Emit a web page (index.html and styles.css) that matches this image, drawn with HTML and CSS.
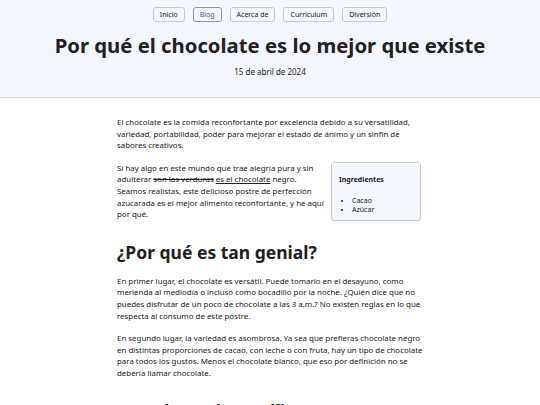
FILE: index.html
```html
<!DOCTYPE html>
<html lang="es">
<head>
<meta charset="utf-8">
<title>Por qué el chocolate es lo mejor que existe</title>
<link rel="stylesheet" href="styles.css">
</head>
<body>
<header class="site-header">
  <nav class="nav">
    <a class="nav-link" href="#">Inicio</a>
    <a class="nav-link current" href="#">Blog</a>
    <a class="nav-link" href="#">Acerca de</a>
    <a class="nav-link" href="#">Curriculum</a>
    <a class="nav-link" href="#">Diversión</a>
  </nav>
  <h1 class="title">Por qué el chocolate es lo mejor que existe</h1>
  <p class="date">15 de abril de 2024</p>
</header>
<main class="content">
  <p class="para">El chocolate es la comida reconfortante por excelencia debido a su versatilidad, variedad, portabilidad, poder para mejorar el estado de ánimo y un sinfín de sabores creativos.</p>
  <aside class="aside">
    <p class="aside-title">Ingredientes</p>
    <ul class="aside-list">
      <li>Cacao</li>
      <li>Azúcar</li>
    </ul>
  </aside>
  <p class="para">Si hay algo en este mundo que trae alegría pura y sin adulterar <del>son las verduras</del> <ins>es el chocolate</ins> negro. Seamos realistas, este delicioso postre de perfección azucarada es el mejor alimento reconfortante, y he aquí por qué.</p>
  <h2 class="subtitle">¿Por qué es tan genial?</h2>
  <p class="para">En primer lugar, el chocolate es versátil. Puede tomarlo en el desayuno, como merienda al mediodía o incluso como bocadillo por la noche. ¿Quién dice que no puedes disfrutar de un poco de chocolate a las 3 a.m.? No existen reglas en lo que respecta al consumo de este postre.</p>
  <p class="para">En segundo lugar, la variedad es asombrosa. Ya sea que prefieras chocolate negro en distintas proporciones de cacao, con leche o con fruta, hay un tipo de chocolate para todos los gustos. Menos el chocolate blanco, que eso por definición no se debería llamar chocolate.</p>
  <h2 class="subtitle">Menciones honoríficas</h2>
</main>
</body>
</html>
```
FILE: styles.css
```css
html, body {
  margin: 0;
  padding: 0;
}
body {
  font-family: "Noto Sans", "Open Sans", sans-serif;
  color: #212121;
  background: #fff;
  font-size: 7.9px;
  line-height: 11.6px;
}
.site-header {
  background: #f5f7ff;
  border-bottom: 1px solid #d0d0d8;
  padding: 7px 0 0;
  height: 90px;
  text-align: center;
}
.nav {
  display: flex;
  justify-content: center;
  gap: 8px;
}
.nav-link {
  display: block;
  font-size: 7px;
  line-height: 13px;
  padding: 0 6px;
  border: 1px solid #c8c8d0;
  border-radius: 3px;
  color: #212121;
  text-decoration: none;
}
.nav-link.current {
  border-color: #7d98cc;
  color: #3b5fa8;
}
.title {
  font-size: 20.3px;
  line-height: 25px;
  font-weight: 700;
  margin: 11px 0 0;
}
.date {
  font-size: 8px;
  line-height: 11px;
  margin: 8px 0 0;
}
.content {
  width: 308px;
  margin: 0 auto 0 117px;
  padding-top: 19px;
}
.para {
  margin: 0 0 11px;
}
.aside {
  float: right;
  width: 74px;
  margin: -1px 4px 0 5px;
  padding: 0 7px;
  background: #f5f7ff;
  border: 1px solid #c8c8d0;
  border-radius: 3px;
}
.aside-title {
  font-weight: 700;
  font-size: 7px;
  line-height: 10px;
  margin: 12px 0 11px;
}
.aside-list {
  margin: 0 0 6px;
  padding-left: 13px;
  font-size: 7px;
  line-height: 9px;
}
.subtitle {
  font-size: 17.5px;
  line-height: 22px;
  font-weight: 700;
  margin: 20px 0 13px;
}
```
